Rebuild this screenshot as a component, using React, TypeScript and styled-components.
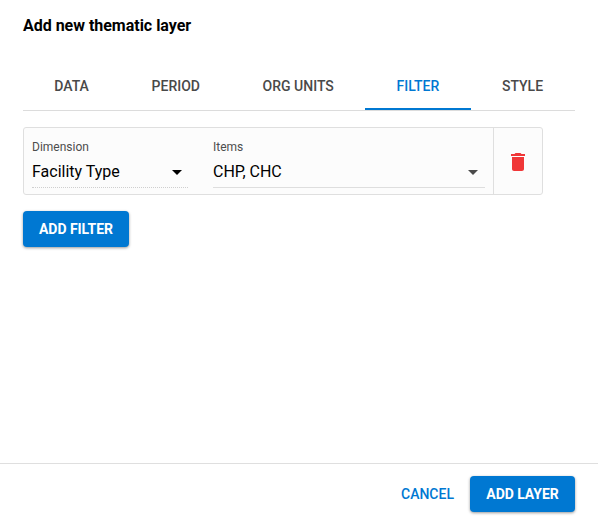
import React from "react";
import styled, { createGlobalStyle } from "styled-components";

const GlobalStyle = createGlobalStyle`
  * { box-sizing: border-box; }
  body {
    margin: 0;
    background: #fff;
    font-family: Roboto, "Liberation Sans", sans-serif;
    color: #000;
    -webkit-font-smoothing: antialiased;
  }
  button { font-family: inherit; cursor: pointer; }
`;

const Dialog = styled.main`
  display: flex;
  flex-direction: column;
  height: 523px;
  overflow: hidden;
`;

const Title = styled.h1`
  margin: 0;
  padding: 14px 23px 0;
  height: 63px;
  font-size: 16px;
  line-height: 24px;
  font-weight: 700;
  letter-spacing: -0.02px;
`;

const TabBar = styled.nav`
  display: flex;
  margin: 0 23px;
  height: 48px;
  border-bottom: 1px solid #dcdcdc;
`;

const Tab = styled.button<{ $active?: boolean }>`
  flex: 1 1 auto;
  padding: 1px 0 0;
  border: 0;
  border-bottom: 2px solid ${(p) => (p.$active ? "#0078d2" : "transparent")};
  background: none;
  color: ${(p) => (p.$active ? "#0078d2" : "#494949")};
  font-size: 14px;
  font-weight: 500;
  line-height: 20px;
  white-space: nowrap;

  &:last-child {
    padding-right: 0.6px;
  }
`;

const Content = styled.section`
  flex: 1;
  padding: 16px 23px 0;
`;

const FilterRow = styled.div`
  display: flex;
  width: 520px;
  height: 68px;
  margin-bottom: 16px;
  border: 1px solid #dfdfdf;
  border-radius: 3px;
  background: #fcfcfc;
`;

const Fields = styled.div`
  display: flex;
  gap: 25px;
  flex: 1;
  padding: 9px 8px 0;
`;

const Field = styled.div<{ $width: number }>`
  width: ${(p) => p.$width}px;
`;

const Label = styled.div`
  height: 20px;
  font-size: 12px;
  line-height: 20px;
  color: #4d4d4d;
`;

const Select = styled.div<{ $dotted?: boolean }>`
  display: flex;
  align-items: center;
  justify-content: space-between;
  height: 31px;
  padding: 0 ${(p) => (p.$dotted ? 6 : 7)}px 1px 0;
  border-bottom: 1px ${(p) => (p.$dotted ? "dotted #cfcfcf" : "solid #dedede")};
  font-size: 16px;
  line-height: 24px;
`;

const Caret = styled.svg`
  display: block;
  width: 10px;
  height: 5px;
  margin-top: 2px;
`;

const DeleteButton = styled.button`
  display: flex;
  align-items: center;
  justify-content: center;
  width: 49px;
  padding: 2px 0 0;
  border: 0;
  border-left: 1px solid #dfdfdf;
  background: none;
`;

const Button = styled.button<{ $primary?: boolean; $width: number }>`
  width: ${(p) => p.$width}px;
  height: 36px;
  padding: 0 0 1px;
  border: 0;
  border-radius: 4px;
  background: ${(p) => (p.$primary ? "#0078d2" : "transparent")};
  color: ${(p) => (p.$primary ? "#fff" : "#0078d2")};
  box-shadow: ${(p) => (p.$primary ? "0 1px 3px rgba(0, 0, 0, 0.4)" : "none")};
  font-size: 14px;
  font-weight: ${(p) => (p.$primary ? 700 : 500)};
  line-height: 20px;
  letter-spacing: ${(p) => (p.$primary ? "-0.04px" : "0")};
  white-space: nowrap;
`;

const Footer = styled.footer`
  display: flex;
  justify-content: flex-end;
  height: 60px;
  padding: 12px 23px 0;
  border-top: 1px solid #dfdfdf;
`;

const tabs = ["DATA", "PERIOD", "ORG UNITS", "FILTER", "STYLE"];

function DropDown({ color }: { color: string }) {
  return (
    <Caret viewBox="0 0 10 5">
      <path d="M0 0h10L5 5z" fill={color} />
    </Caret>
  );
}

export default function App() {
  return (
    <>
      <GlobalStyle />
      <Dialog>
        <Title>Add new thematic layer</Title>
        <TabBar>
          {tabs.map((name) => (
            <Tab key={name} $active={name === "FILTER"}>{name}</Tab>
          ))}
        </TabBar>
        <Content>
          <FilterRow>
            <Fields>
              <Field $width={156}>
                <Label>Dimension</Label>
                <Select $dotted>Facility Type<DropDown color="#000" /></Select>
              </Field>
              <Field $width={272}>
                <Label>Items</Label>
                <Select>CHP, CHC<DropDown color="#4a4a4a" /></Select>
              </Field>
            </Fields>
            <DeleteButton aria-label="Delete filter">
              <svg width="24" height="24" viewBox="0 0 24 24" fill="#f03738">
                <path d="M6 19c0 1.1.9 2 2 2h8c1.1 0 2-.9 2-2V7H6v12zM19 4h-3.5l-1-1h-5l-1 1H5v2h14V4z" />
              </svg>
            </DeleteButton>
          </FilterRow>
          <Button $primary $width={106}>ADD FILTER</Button>
        </Content>
        <Footer>
          <Button $width={85}>CANCEL</Button>
          <Button $primary $width={105}>ADD LAYER</Button>
        </Footer>
      </Dialog>
    </>
  );
}
